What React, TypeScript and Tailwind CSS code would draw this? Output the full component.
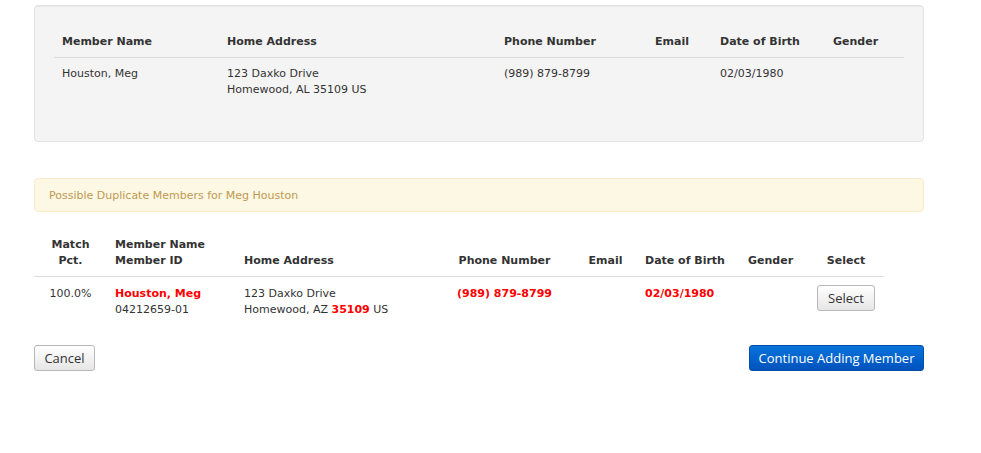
import React from "react";

const font = "font-['DejaVu_Sans',Verdana,sans-serif]";
const btnFont = "font-['Open_Sans','Noto_Sans',sans-serif]";

export default function App() {
  return (
    <div className={`w-[981px] h-[453px] bg-white text-[11px] leading-[16px] text-[#333] ${font}`}>
      <div className="pt-[5px] pl-[34px] w-[924px]">
        {/* Top well */}
        <div className="h-[137px] rounded-[4px] border border-[#e3e3e3] bg-[#f4f4f4] shadow-[inset_0_1px_1px_rgba(0,0,0,0.05)] pt-[20px] px-[19px]">
          <table className="w-[850px] border-collapse table-fixed">
            <colgroup>
              <col className="w-[165px]" />
              <col className="w-[277px]" />
              <col className="w-[151px]" />
              <col className="w-[65px]" />
              <col className="w-[113px]" />
              <col className="w-[79px]" />
            </colgroup>
            <thead>
              <tr className="border-b border-[#dddddd]">
                <th className="p-[8px] pb-[7px] text-left font-bold">Member Name</th>
                <th className="p-[8px] pb-[7px] text-left font-bold">Home Address</th>
                <th className="p-[8px] pb-[7px] text-left font-bold">Phone Number</th>
                <th className="p-[8px] pb-[7px] text-left font-bold">Email</th>
                <th className="p-[8px] pb-[7px] text-left font-bold">Date of Birth</th>
                <th className="p-[8px] pb-[7px] text-left font-bold">Gender</th>
              </tr>
            </thead>
            <tbody>
              <tr>
                <td className="p-[8px] align-top">Houston, Meg</td>
                <td className="p-[8px] align-top">
                  123 Daxko Drive
                  <br />
                  Homewood, AL 35109 US
                </td>
                <td className="p-[8px] align-top">(989) 879-8799</td>
                <td className="p-[8px] align-top"></td>
                <td className="p-[8px] align-top">02/03/1980</td>
                <td className="p-[8px] align-top"></td>
              </tr>
            </tbody>
          </table>
        </div>

        {/* Alert */}
        <div className="mt-[36px] h-[34px] rounded-[4px] border border-[#faebcc] bg-[#fcf8e3] text-[#c09853] pl-[14px] pt-[1px] flex items-center">
          Possible Duplicate Members for Meg Houston
        </div>

        {/* Duplicates table */}
        <table className="mt-[17px] w-[850px] border-collapse table-fixed">
          <colgroup>
            <col className="w-[73px]" />
            <col className="w-[129px]" />
            <col className="w-[199px]" />
            <col className="w-[139px]" />
            <col className="w-[63px]" />
            <col className="w-[103px]" />
            <col className="w-[68px]" />
            <col className="w-[76px]" />
          </colgroup>
          <thead>
            <tr className="border-b border-[#dddddd]">
              <th className="p-[8px] pb-[7px] align-bottom text-center font-bold">
                Match
                <br />
                Pct.
              </th>
              <th className="p-[8px] pb-[7px] align-bottom text-left font-bold whitespace-nowrap">
                Member Name
                <br />
                Member ID
              </th>
              <th className="p-[8px] pb-[7px] align-bottom text-left font-bold">Home Address</th>
              <th className="p-[8px] pb-[7px] align-bottom text-center font-bold">Phone Number</th>
              <th className="p-[8px] pb-[7px] align-bottom text-center font-bold">Email</th>
              <th className="p-[8px] pb-[7px] align-bottom text-left font-bold whitespace-nowrap">Date of Birth</th>
              <th className="p-[8px] pb-[7px] align-bottom text-left font-bold">Gender</th>
              <th className="p-[8px] pb-[7px] align-bottom text-center font-bold">Select</th>
            </tr>
          </thead>
          <tbody>
            <tr>
              <td className="p-[8px] pt-[9px] align-top text-center">100.0%</td>
              <td className="p-[8px] pt-[9px] align-top">
                <span className="font-bold text-[#ff0000]">Houston, Meg</span>
                <br />
                04212659-01
              </td>
              <td className="p-[8px] pt-[9px] align-top whitespace-nowrap">
                123 Daxko Drive
                <br />
                Homewood, AZ <span className="font-bold text-[#ff0000]">35109</span> US
              </td>
              <td className="p-[8px] pt-[9px] align-top text-center font-bold text-[#ff0000] whitespace-nowrap">(989) 879-8799</td>
              <td className="p-[8px] pt-[9px] align-top"></td>
              <td className="p-[8px] pt-[9px] align-top font-bold text-[#ff0000]">02/03/1980</td>
              <td className="p-[8px] pt-[9px] align-top"></td>
              <td className="p-[8px] align-top text-center">
                <button
                  className={`${btnFont} inline-flex items-center justify-center w-[58px] h-[26px] rounded-[3px] border border-[#b8b8b8] bg-gradient-to-b from-[#ffffff] to-[#e6e6e6] text-[13px] text-[#333] shadow-[inset_0_1px_0_rgba(255,255,255,0.3)]`}
                >
                  Select
                </button>
              </td>
            </tr>
          </tbody>
        </table>

        {/* Buttons */}
        <div className="mt-[19px] flex justify-between items-center">
          <button
            className={`${btnFont} inline-flex items-center justify-center w-[61px] h-[26px] rounded-[3px] border border-[#b8b8b8] bg-gradient-to-b from-[#ffffff] to-[#e6e6e6] text-[13px] text-[#333]`}
          >
            Cancel
          </button>
          <button
            className={`${btnFont} inline-flex items-center justify-center w-[175px] h-[26px] rounded-[3px] border border-[#0350a8] bg-gradient-to-b from-[#0a74dc] to-[#0052bd] text-[13px] text-white`}
          >
            Continue Adding Member
          </button>
        </div>
      </div>
    </div>
  );
}
